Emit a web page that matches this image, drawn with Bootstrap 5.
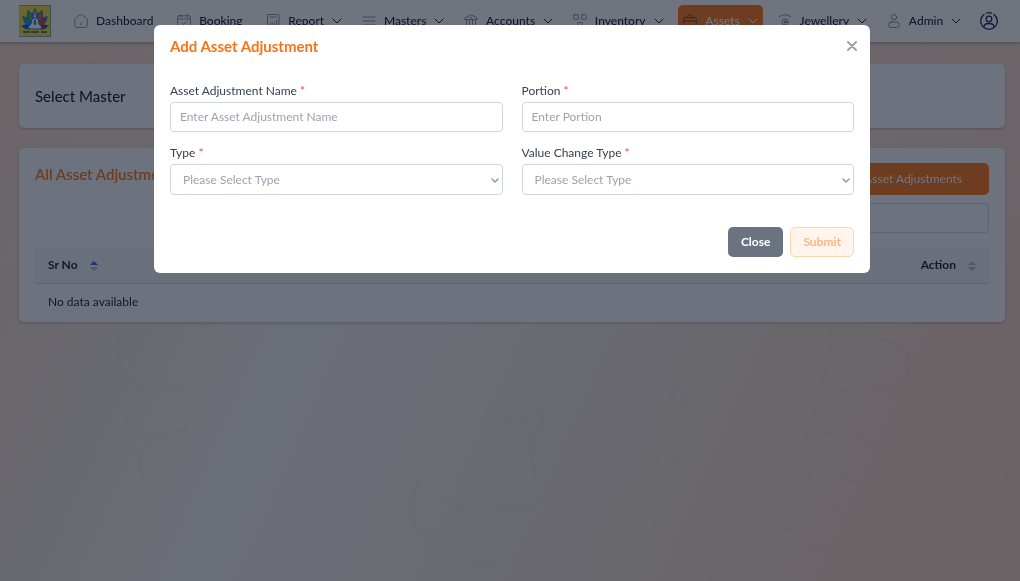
<!DOCTYPE html>
<html lang="en">
<head>
<meta charset="utf-8">
<meta name="viewport" content="width=device-width, initial-scale=1">
<title>Asset Adjustments</title>
<link href="https://cdn.jsdelivr.net/npm/bootstrap@5.3.0/dist/css/bootstrap.min.css" rel="stylesheet">
<style>
  :root { --brand: #f97316; --ink: #0f172a; --line: #d1d5db; }
  body { font-family: Lato, "Open Sans", sans-serif; font-size: 12px; line-height: 16px; color: var(--ink); background: #f7f0ea; min-height: 100vh; overflow: hidden; }
  svg { flex: none; fill: none; stroke: currentColor; stroke-linecap: round; stroke-linejoin: round; }
  .backdrop-art { position: fixed; inset: 0; width: 100%; height: 100%; z-index: -1; stroke: none; }
  .topbar { height: 42px; padding: 0 22px 0 19px; background: #fff; box-shadow: 0 1px 4px rgba(15,23,42,.35); }
  .topbar .menu { margin-left: 18px; }
  .menu-link { display: flex; align-items: center; gap: 8px; height: 32px; padding: 0 5px; border-radius: 5px; color: var(--ink); text-decoration: none; font-weight: 500; white-space: nowrap; }
  .menu-link.plain { margin-right: 4px; }
  .menu-link .glyph { width: 14px; height: 14px; color: #64748b; stroke-width: .8; }
  .menu-link .chev { width: 10px; height: 10px; }
  .menu-link.current { background: var(--brand); color: #fff; }
  .menu-link.current .glyph { color: #334155; }
  .profile { color: #1e1b4b; margin-left: 4px; }
  .page { padding: 22px 15px 20px 19px; }
  .panel { background: #f8fbfd; border-radius: 5px; padding: 16px; box-shadow: 0 1px 3px rgba(15,23,42,.25); }
  .panel + .panel { margin-top: 20px; padding: 15px 16px 12px; }
  .panel-title { font-size: 15px; line-height: 22px; margin: 0; font-weight: 500; }
  .panel-title.lone { line-height: 32px; }
  .panel-title.orange { font-weight: 600; }
  .orange { color: var(--brand); }
  .btn { --bs-btn-font-size: 12px; --bs-btn-line-height: 16px; --bs-btn-border-radius: 5px; }
  .btn-brand, .btn-brand:hover { background: var(--brand); color: #fff; padding: 7px 26px; }
  .search-box { width: 200px; height: 30px; }
  .form-control, .form-select { font-size: 12px; line-height: 16px; border-color: var(--line); border-radius: 4px; }
  .form-control { padding: 5px 9px 7px; height: 30px; }
  .form-control::placeholder { color: #9ca3af; }
  .form-select { color: #9ca3af; height: 31px; padding: 6px 24px 6px 12px; background-position: right 2px center; background-size: 10px 10px;
    background-image: url("data:image/svg+xml,%3csvg xmlns='http://www.w3.org/2000/svg' viewBox='0 0 10 10'%3e%3cpath d='M2 4l3 3 3-3' fill='none' stroke='%238b93a5' stroke-width='1.4' stroke-linecap='round'/%3e%3c/svg%3e"); }
  .grid-table { --bs-table-bg: transparent; color: var(--ink); margin: 15px 0 0; }
  .grid-table th { background: #f0f2f5; padding: 9px 13px 10px; border-bottom: 1px solid var(--line); font-weight: 700; }
  .grid-table td { padding: 10px 13px 0; border: 0; }
  .sorter { width: 8px; height: 10px; margin-left: 12px; stroke: none; }
  .modal { padding-left: 4px; background: rgba(15,23,42,.6); }
  .modal-dialog { max-width: 716px; margin-top: 25px; }
  .modal-content { border: 0; border-radius: 6px; padding: 10px 16px 16px; }
  .modal-title { font-size: 15px; line-height: 22px; font-weight: 700; margin-bottom: 10px; }
  .close-x { border: 0; background: none; padding: 0; width: 10px; height: 22px; display: flex; align-items: center; margin-right: -3px; color: #9ca3af; }
  .form-label { margin: 0 0 3px; color: #374151; font-weight: 400; }
  .form-label span { color: #ef4444; }
  .fields { --bs-gutter-x: 19px; row-gap: 13px; padding-top: 16px; }
  .modal-actions { gap: 7px; padding-top: 32px; }
  .modal-actions .btn { padding: 6px 12px; font-weight: 700; }
  .btn-close-gray, .btn-close-gray:hover { background: #6b7280; color: #fff; }
  .btn-submit:disabled { background: #fff5ed; border-color: #fed7aa; color: #fdb679; opacity: 1; }
</style>
</head>
<body>
<svg class="backdrop-art" viewBox="0 0 1020 581" preserveAspectRatio="none" aria-hidden="true">
  <defs>
    <linearGradient id="wash" x1="0" y1="0" x2="1" y2=".25">
      <stop offset="0" stop-color="#fad2bc"/><stop offset=".08" stop-color="#f4dcca"/><stop offset=".25" stop-color="#f1e6d9"/><stop offset=".4" stop-color="#f3f0ea"/>
      <stop offset=".55" stop-color="#f3ece5"/><stop offset=".75" stop-color="#f1e2d5"/><stop offset=".94" stop-color="#f1ddcb"/><stop offset="1" stop-color="#f8d4c4"/>
    </linearGradient>
    <linearGradient id="topwarm" x1="0" y1="0" x2="0" y2="1">
      <stop offset="0" stop-color="#fbdcc8" stop-opacity=".8"/><stop offset=".5" stop-color="#fbdcc8" stop-opacity="0"/>
    </linearGradient>
  </defs>
  <rect width="1020" height="581" fill="url(#wash)"/>
  <rect width="1020" height="581" fill="url(#topwarm)"/>
  <g fill="none" stroke="#64748b" stroke-opacity=".06">
    <path d="M745 410Q790 345 790 320M710 581Q820 470 833 320M440 500q75 25 150-6M485 412q32 16 65-4"/>
    <path d="M840 340h40q28 0 28 24t-30 26h-40M878 390q28 4 25 32t-38 18l-38-8M880 438q15 20 2 38t-38 0l-28-22M868 482q4 30-20 30t-48-38M842 516q0 34-22 34t-45-45"/>
    <path d="M190 320h-45q-22 0-26 24t24 45h44M143 390q-22 4-18 28t24 20l40-10M148 440q-15 24 0 44t42-10"/>
    <ellipse cx="678" cy="397" rx="8" ry="13"/><ellipse cx="678" cy="397" rx="4" ry="7"/><ellipse cx="666" cy="462" rx="8" ry="13"/><ellipse cx="647" cy="520" rx="8" ry="13"/>
    <ellipse cx="460" cy="524" rx="9" ry="14"/><ellipse cx="566" cy="524" rx="9" ry="14"/><ellipse cx="532" cy="420" rx="10" ry="16"/><ellipse cx="498" cy="420" rx="10" ry="16"/>
    <path d="M500 435q-10 20-8 42M526 435q10 20 8 42"/><circle cx="1012" cy="424" r="8"/><circle cx="998" cy="477" r="8"/><circle cx="979" cy="527" r="8"/>
    <path d="M418 480q-14 60 12 50q-2 30 20 18q5 20 22 8q8 20 20 3q12 20 25 3q12 16 24-3q16 16 22-10q24 20 22-18q25 10 20-50"/>
  </g>
</svg>

<header class="topbar d-flex align-items-center">
  <a href="#" aria-label="Home" class="d-flex">
    <svg width="32" height="32" viewBox="0 0 32 32" stroke="none">
      <path fill="#f0df35" d="M0 0h32v32H0z"/>
      <path fill="#f59a1b" d="M16 4q4 4 3 10h-6q-1-6 3-10z"/>
      <path fill="#62a83a" d="M9 6q6 2 6 11l-4 1q-4-6-2-12z"/><path fill="#e3562b" d="M23 6q-6 2-6 11l4 1q4-6 2-12z"/>
      <path fill="#1b9cc0" d="M4 12q7 0 9 8l-2 3q-6-4-7-11z"/><path fill="#dc3b25" d="M28 12q-7 0-9 8l2 3q6-4 7-11z"/>
      <path fill="#24489f" d="M3 21q5-3 9 1l-1 2q-5 1-8-3z"/><path fill="#8d2a4d" d="M29 21q-5-3-9 1l1 2q5 1 8-3z"/>
      <circle cx="16" cy="11" r="2" fill="#fff"/><path fill="#fff" d="M14 13h4q2 2 2 6l3 3-1 2H10l-1-2 3-3q0-4 2-6z"/>
      <path fill="#f97316" d="M16 15l1 3-1 2-1-2z"/>
      <path stroke="#3a4a73" stroke-width="1.500" stroke-linecap="butt" stroke-dasharray="7 1 8 2 6 1" d="M4 27h24"/>
    </svg>
  </a>
  <nav class="menu d-flex flex-grow-1 align-items-center justify-content-between" aria-label="Main">
    <a class="menu-link plain" href="#"><svg class="glyph" viewBox="0 0 14 14"><path d="M.7 6.200Q.7 5 1.700 4.200L5.500 1.200Q7 0 8.500 1.200l3.800 3Q13.300 5 13.300 6.200V11q0 2.500-2.500 2.500H3.200Q.7 13.500.7 11zM7 9v2"/></svg>Dashboard</a>
    <a class="menu-link plain" href="#"><svg class="glyph" viewBox="0 0 14 14"><rect x=".7" y="1.800" width="12.600" height="11.500" rx="1"/><path d="M.7 5h12.600M4 .5v2.600M10 .5v2.600M4.800 9l1.600 1.600L9.500 7.500"/></svg>Booking</a>
    <a class="menu-link" href="#"><svg class="glyph" viewBox="0 0 14 14"><rect x="1.500" y=".5" width="11.500" height="13" rx="1"/><path d="M4 3h6.500M4 12V9.500M6.200 12V8M8.400 12V9M10.600 12V6.500"/></svg>Report<svg class="chev" viewBox="0 0 10 10"><path d="M1 3l4 4 4-4"/></svg></a>
    <a class="menu-link" href="#"><svg class="glyph" viewBox="0 0 14 14"><path d="M1 3h12M1 7h12M1 11h12"/></svg>Masters<svg class="chev" viewBox="0 0 10 10"><path d="M1 3l4 4 4-4"/></svg></a>
    <a class="menu-link" href="#"><svg class="glyph" viewBox="0 0 14 14"><path d="M1 4L7 .7 13 4v1.500H1zM2.500 6v6M5.500 6v6M8.500 6v6M11.500 6v6M1 13h12M6 3.500h2"/></svg>Accounts<svg class="chev" viewBox="0 0 10 10"><path d="M1 3l4 4 4-4"/></svg></a>
    <a class="menu-link" href="#"><svg class="glyph" viewBox="0 0 14 14"><rect x=".7" y=".7" width="4.600" height="4.600" rx=".5"/><rect x="8.700" y=".7" width="4.600" height="4.600" rx=".5"/><rect x="4.700" y="8.500" width="4.600" height="4.600" rx=".5"/></svg>Inventory<svg class="chev" viewBox="0 0 10 10"><path d="M1 3l4 4 4-4"/></svg></a>
    <a class="menu-link current" href="#" aria-current="page"><svg class="glyph" viewBox="0 0 14 14"><rect x=".7" y="3.500" width="12.600" height="10" rx="1"/><path d="M4.500 3.300V2q0-1 1-1h3q1 0 1 1v1.300M.7 7h12.600"/></svg>Assets<svg class="chev" viewBox="0 0 10 10"><path d="M1 3l4 4 4-4"/></svg></a>
    <a class="menu-link" href="#"><svg class="glyph" viewBox="0 0 14 14"><path d="M1.500 2.500Q7-1.200 12.500 2.500"/><circle cx="7" cy="8" r="3"/><circle cx="7" cy="8" r="1" fill="currentColor"/><path d="M2 12.500h10"/></svg>Jewellery<svg class="chev" viewBox="0 0 10 10"><path d="M1 3l4 4 4-4"/></svg></a>
    <a class="menu-link" href="#"><svg class="glyph" viewBox="0 0 14 14"><circle cx="7" cy="3.200" r="2.700"/><rect x="1.500" y="8" width="11" height="5.500" rx="2.700"/></svg>Admin<svg class="chev" viewBox="0 0 10 10"><path d="M1 3l4 4 4-4"/></svg></a>
    <a href="#" aria-label="Profile" class="d-flex profile"><svg width="18" height="18" viewBox="0 0 18 18" stroke-width="1.300"><path d="M4 2.400A8.300 8.300 0 1 0 14 2.400M6.500 1.100a8.300 8.300 0 0 1 5 0"/><circle cx="9" cy="7" r="2.800"/><path d="M4 15q0-3.500 5-3.500t5 3.500"/></svg></a>
  </nav>
</header>

<main class="page">
  <section class="panel">
    <h1 class="panel-title lone">Select Master</h1>
  </section>
  <section class="panel">
    <div class="d-flex justify-content-between align-items-start">
      <h2 class="panel-title orange">All Asset Adjustments</h2>
      <button type="button" class="btn btn-brand">Add Asset Adjustments</button>
    </div>
    <div class="d-flex justify-content-end mt-2"><input type="search" class="form-control search-box bg-transparent" aria-label="Search"></div>
    <table class="table grid-table">
      <thead><tr>
        <th scope="col">Sr No<svg class="sorter" viewBox="0 0 8 10"><path fill="#3b5bfd" d="M4 0l4 4H0z"/><path fill="#b4bac6" d="M4 10l4-4H0z"/></svg></th>
        <th scope="col" class="text-end">Action<svg class="sorter" viewBox="0 0 8 10"><path fill="#b4bac6" d="M4 0l4 4H0zM4 10l4-4H0z"/></svg></th>
      </tr></thead>
      <tbody><tr><td colspan="2">No data available</td></tr></tbody>
    </table>
  </section>
</main>

<div class="modal show d-block" tabindex="-1" role="dialog" aria-modal="true" aria-labelledby="dlgTitle">
  <div class="modal-dialog">
    <form class="modal-content">
      <div class="d-flex justify-content-between">
        <h2 class="modal-title orange" id="dlgTitle">Add Asset Adjustment</h2>
        <button type="button" class="close-x" aria-label="Close dialog"><svg width="10" height="10" viewBox="0 0 10 10" stroke-width="2"><path d="M1 1l8 8M9 1L1 9"/></svg></button>
      </div>
      <div class="row fields">
        <div class="col-6"><label class="form-label d-block" for="adjName">Asset Adjustment Name <span>*</span></label><input id="adjName" class="form-control" placeholder="Enter Asset Adjustment Name"></div>
        <div class="col-6"><label class="form-label d-block" for="portion">Portion <span>*</span></label><input id="portion" class="form-control" placeholder="Enter Portion"></div>
        <div class="col-6"><label class="form-label d-block" for="adjType">Type <span>*</span></label><select id="adjType" class="form-select"><option>Please Select Type</option></select></div>
        <div class="col-6"><label class="form-label d-block" for="changeType">Value Change Type <span>*</span></label><select id="changeType" class="form-select"><option>Please Select Type</option></select></div>
      </div>
      <div class="d-flex justify-content-end modal-actions">
        <button type="button" class="btn btn-close-gray">Close</button>
        <button type="submit" class="btn btn-submit" disabled>Submit</button>
      </div>
    </form>
  </div>
</div>
<script src="https://cdn.jsdelivr.net/npm/bootstrap@5.3.0/dist/js/bootstrap.bundle.min.js"></script>
</body>
</html>
